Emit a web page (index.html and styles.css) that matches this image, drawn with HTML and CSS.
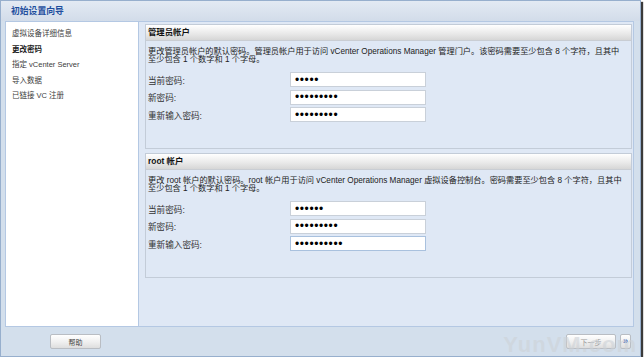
FILE: index.html
```html
<!DOCTYPE html>
<html lang="zh-CN">
<head>
    <meta charset="UTF-8">
    <title>初始设置向导</title>
    <link rel="stylesheet" href="styles.css">
</head>
<body>
    <div class="window">
        <div class="titlebar">初始设置向导</div>
        <div class="wizard">
            <ul class="steps">
                <li>虚拟设备详细信息</li>
                <li class="current">更改密码</li>
                <li>指定 vCenter Server</li>
                <li>导入数据</li>
                <li>已链接 VC 注册</li>
            </ul>
            <div class="main">
                <div class="section">
                    <div class="section-head">管理员帐户</div>
                    <div class="section-body">
                        <p class="desc">更改管理员帐户的默认密码。管理员帐户用于访问 vCenter Operations Manager 管理门户。该密码需要至少包含 8 个字符，且其中至少包含 1 个数字和 1 个字母。</p>
                        <div class="row">
                            <label>当前密码:</label>
                            <input type="password" value="12345">
                        </div>
                        <div class="row">
                            <label>新密码:</label>
                            <input type="password" value="123456789">
                        </div>
                        <div class="row">
                            <label>重新输入密码:</label>
                            <input type="password" value="123456789">
                        </div>
                    </div>
                </div>
                <div class="section">
                    <div class="section-head">root 帐户</div>
                    <div class="section-body">
                        <p class="desc">更改 root 帐户的默认密码。root 帐户用于访问 vCenter Operations Manager 虚拟设备控制台。密码需要至少包含 8 个字符，且其中至少包含 1 个数字和 1 个字母。</p>
                        <div class="row">
                            <label>当前密码:</label>
                            <input type="password" value="123456">
                        </div>
                        <div class="row">
                            <label>新密码:</label>
                            <input type="password" value="123456789">
                        </div>
                        <div class="row">
                            <label>重新输入密码:</label>
                            <input type="password" value="1234567890" class="focused">
                        </div>
                    </div>
                </div>
            </div>
        </div>
        <div class="footer">
            <button class="btn help">帮助</button>
            <div class="nav">
                <button class="btn next" disabled>下一步</button>
                <button class="btn more">»</button>
            </div>
        </div>
        <div class="watermark">YunVM.com</div>
    </div>
</body>
</html>
```

FILE: styles.css
```css
body {
    margin: 0;
    background: #ffffff;
    font-family: "Liberation Sans", "Noto Sans CJK SC", sans-serif;
}
.window {
    position: relative;
    width: 639px;
    height: 355px;
    border: 1px solid #97afcd;
    background: #d3dfec;
    box-shadow: 2px 2px 1px #3a3a3a;
    display: flex;
    flex-direction: column;
    overflow: hidden;
}
.titlebar {
    height: 20px;
    line-height: 20px;
    padding-left: 10px;
    font-size: 8.8px;
    font-weight: bold;
    color: #1f4f9e;
    background: linear-gradient(#e3eaf3, #d2dce9);
}
.wizard {
    display: flex;
    height: 306px;
    margin: 0 6px 0 4px;
}
.steps {
    list-style: none;
    margin: 0;
    padding: 4px 0 0 6px;
    width: 126px;
    background: #ffffff;
    border: 1px solid #b4c8e3;
}
.steps li {
    height: 15.6px;
    line-height: 15.6px;
    font-size: 7.5px;
    color: #3c3c3c;
}
.steps li.current {
    font-weight: bold;
    color: #222;
}
.main {
    flex: 1;
    background: #dfe8f5;
    border: 1px solid #b4c8e3;
    border-left: none;
    padding: 2px 1px 0 6px;
}
.section {
    border: 1px solid #c3ccd8;
    margin-bottom: 4px;
}
.section-head {
    height: 15px;
    line-height: 15px;
    padding-left: 2px;
    font-size: 8.4px;
    font-weight: bold;
    color: #111;
    background: linear-gradient(#ffffff, #e8e8e8 60%, #d6d6d6);
    border-bottom: 1px solid #c9cdd3;
}
.section-body {
    padding: 7px 2px 26px 2px;
}
.desc {
    margin: 0 0 8px 0;
    font-size: 8.2px;
    line-height: 8px;
    color: #222;
    padding-right: 2px;
}
.row {
    display: flex;
    align-items: center;
    height: 15px;
    margin-bottom: 2.5px;
}
.row:last-child {
    margin-bottom: 0;
}
.row label {
    width: 142px;
    font-size: 8.6px;
    color: #333;
}
.row input {
    box-sizing: border-box;
    width: 136px;
    height: 15px;
    margin: 0;
    padding: 0 4px;
    border: 1px solid #c9d0d9;
    background: #ffffff;
    font-family: "Liberation Sans", sans-serif;
    font-size: 12px;
    letter-spacing: 0.6px;
    color: #000;
    outline: none;
}
.row input.focused {
    border-color: #a9c1de;
}
.footer {
    flex: 1;
    display: flex;
    justify-content: space-between;
    align-items: flex-start;
    padding: 7px 9px 0 49px;
}
.nav {
    display: flex;
    gap: 4px;
}
.btn {
    height: 15px;
    padding: 0;
    border: 1px solid #b9bdc3;
    border-radius: 2px;
    background: linear-gradient(#ffffff, #efefef 55%, #dedede);
    font-family: "Liberation Sans", "Noto Sans CJK SC", sans-serif;
    font-size: 7px;
    color: #444;
}
.help {
    width: 51px;
}
.next {
    width: 50px;
    color: #9a9a9a;
}
.more {
    width: 11px;
    color: #1f4fb0;
    font-size: 9px;
    font-weight: bold;
    line-height: 11px;
}
.watermark {
    position: absolute;
    right: 3px;
    bottom: 0;
    font-size: 22px;
    line-height: 22px;
    font-weight: bold;
    color: rgba(205, 210, 215, 0.6);
    letter-spacing: 1px;
    pointer-events: none;
}
```
